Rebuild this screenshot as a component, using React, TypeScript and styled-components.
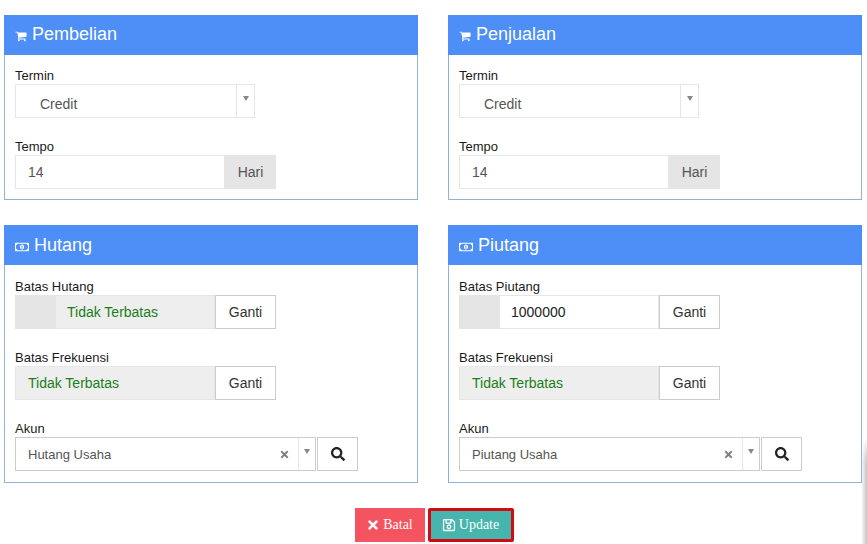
import React from "react";
import styled, { createGlobalStyle } from "styled-components";
import { FaRegMoneyBillAlt, FaTimes, FaSearch, FaRegSave } from "react-icons/fa";

const GlobalStyle = createGlobalStyle`
  html, body {
    margin: 0;
    padding: 0;
    background: #fff;
    overflow: hidden;
  }
  body {
    font-family: "Liberation Sans", Arial, sans-serif;
    font-size: 14px;
    color: #222;
  }
`;

const Page = styled.div`
  position: relative;
  width: 867px;
  height: 544px;
  box-sizing: border-box;
  padding: 15px 5px 0 4px;
`;

const EdgeShadow = styled.div`
  position: absolute;
  top: 438px;
  right: 0;
  bottom: 0;
  width: 6px;
  background: linear-gradient(to right, rgba(200, 200, 200, 0), rgba(190, 190, 190, 0.9));
  mask-image: linear-gradient(to bottom, transparent, #000 24px);
`;

const PanelGrid = styled.div`
  display: grid;
  grid-template-columns: 414px 414px;
  column-gap: 30px;
  row-gap: 25px;
  align-items: start;
`;

const Panel = styled.section`
  border: 1px solid #8fb2d6;
  border-top: 0;
  box-sizing: border-box;
`;

const Heading = styled.h3<{ $lift: number }>`
  display: flex;
  align-items: center;
  gap: 5px;
  height: 40px;
  box-sizing: border-box;
  margin: 0 -1px;
  padding: 0 11px ${p => p.$lift}px;
  background: #4d8ef7;
  color: #fff;
  font-size: 18px;
  font-weight: 400;
  line-height: 38px;

  svg {
    margin-top: 4px;
  }
`;

const PanelBody = styled.div<{ $top: number; $bottom: number }>`
  display: flex;
  flex-direction: column;
  gap: 19px;
  padding: ${p => p.$top}px 10px ${p => p.$bottom}px;
`;

const Field = styled.div`
  display: flex;
  flex-direction: column;
`;

const Label = styled.label`
  height: 18px;
  line-height: 20px;
  font-size: 13px;
  color: #1a1a1a;
`;

const Row = styled.div<{ $width: number }>`
  display: flex;
  width: ${p => p.$width}px;
  height: 34px;
`;

const SelectBox = styled.div<{ $dark?: boolean }>`
  flex: 1;
  display: flex;
  align-items: center;
  box-sizing: border-box;
  border: 1px solid ${p => (p.$dark ? "#ccc" : "#e5e6e7")};
  background: #fff;
  color: #555;
  font-size: ${p => (p.$dark ? 13 : 14)}px;
`;

const SelectValue = styled.span<{ $indent: number; $drop?: number }>`
  flex: 1;
  padding-left: ${p => p.$indent}px;
  padding-top: ${p => p.$drop ?? 0}px;
`;

const Clear = styled.span`
  display: flex;
  color: #808080;
  margin-right: 8px;
`;

const Caret = styled.span<{ $width: number }>`
  align-self: stretch;
  width: ${p => p.$width}px;
  border-left: 1px solid #e5e6e7;
  display: flex;
  justify-content: center;
  padding-top: 11px;
  box-sizing: border-box;

  &::before {
    content: "";
    width: 0;
    height: 0;
    border-left: 3px solid transparent;
    border-right: 3px solid transparent;
    border-top: 5px solid #888;
  }
`;

const TextInput = styled.div<{ $indent?: number; $readonly?: boolean; $tone?: string }>`
  flex: 1;
  display: flex;
  align-items: center;
  box-sizing: border-box;
  padding-left: ${p => p.$indent ?? 12}px;
  border: 1px solid #e5e6e7;
  background: ${p => (p.$readonly ? "#eee" : "#fff")};
  color: ${p => p.$tone ?? "#555"};
  font-size: 14px;
`;

const Addon = styled.div<{ $width: number }>`
  width: ${p => p.$width}px;
  flex: none;
  display: flex;
  align-items: center;
  justify-content: center;
  background: #e5e5e5;
  color: #555;
  font-size: 14px;
`;

const SideButton = styled.button<{ $width: number }>`
  width: ${p => p.$width}px;
  flex: none;
  box-sizing: border-box;
  display: flex;
  align-items: center;
  justify-content: center;
  padding: 0;
  border: 1px solid #ccc;
  background: #fff;
  color: #333;
  font-family: inherit;
  font-size: 14px;
`;

const SearchButton = styled(SideButton)`
  margin-left: 1px;
  color: #222;
`;

const Actions = styled.div`
  display: flex;
  justify-content: center;
  gap: 3px;
  margin-top: 25px;
  padding-left: 2px;
`;

const ActionButton = styled.button<{ $tone: string; $focused?: boolean }>`
  height: 34px;
  box-sizing: border-box;
  display: flex;
  align-items: center;
  justify-content: center;
  gap: 3px;
  border: ${p => (p.$focused ? "3px solid #d40a12" : "0")};
  border-radius: ${p => (p.$focused ? "2px" : "0")};
  padding: 0;
  background: ${p => p.$tone};
  color: #fff;
  font-family: "Liberation Serif", "Times New Roman", serif;
  font-size: 14px;
`;

const BatalButton = styled(ActionButton)`
  width: 70px;
`;

const UpdateButton = styled(ActionButton)`
  width: 86px;
`;

const CartIcon = () => (
  <svg width="12" height="12" viewBox="0 0 1792 1792" fill="currentColor" aria-hidden="true">
    <path d="M704 1536q0 52-38 90t-90 38-90-38-38-90 38-90 90-38 90 38 38 90zm896 0q0 52-38 90t-90 38-90-38-38-90 38-90 90-38 90 38 38 90zm128-1088v512q0 24-16.500 42.500t-40.500 21.500l-1044 122q13 60 13 70 0 16-24 64h920q26 0 45 19t19 45-19 45-45 19h-1024q-26 0-45-19t-19-45q0-11 8-31.500t16-36 21.500-40 15.500-29.500l-177-823h-204q-26 0-45-19t-19-45 19-45 45-19h256q16 0 28.500 6.500t19.500 15.500 13 24.500 8 26 5.500 29.500 4.500 26h1201q26 0 45 19t19 45z" />
  </svg>
);

const SelectField = ({ value }: { value: string }) => (
  <SelectBox>
    <SelectValue $indent={24} $drop={5}>{value}</SelectValue>
    <Caret $width={18} />
  </SelectBox>
);

const AkunField = ({ value }: { value: string }) => (
  <Row $width={343}>
    <SelectBox $dark>
      <SelectValue $indent={12}>{value}</SelectValue>
      <Clear><FaTimes size={11} /></Clear>
      <Caret $width={17} />
    </SelectBox>
    <SearchButton $width={41}><FaSearch /></SearchButton>
  </Row>
);

const TermPanel = ({ title }: { title: string }) => (
  <Panel>
    <Heading $lift={2}><CartIcon />{title}</Heading>
    <PanelBody $top={11} $bottom={10}>
      <Field>
        <Label>Termin</Label>
        <Row $width={240}><SelectField value="Credit" /></Row>
      </Field>
      <Field>
        <Label>Tempo</Label>
        <Row $width={261}>
          <TextInput>14</TextInput>
          <Addon $width={51}>Hari</Addon>
        </Row>
      </Field>
    </PanelBody>
  </Panel>
);

const LimitPanel = ({ title, limit, account }: { title: string; limit?: string; account: string }) => (
  <Panel>
    <Heading $lift={0}><FaRegMoneyBillAlt size={14} />{title}</Heading>
    <PanelBody $top={12} $bottom={11}>
      <Field>
        <Label>Batas {title}</Label>
        <Row $width={261}>
          <Addon $width={40} />
          {limit ? (
            <TextInput $indent={11} $tone="#222">{limit}</TextInput>
          ) : (
            <TextInput $indent={11} $readonly $tone="#1a7f1a">Tidak Terbatas</TextInput>
          )}
          <SideButton $width={61}>Ganti</SideButton>
        </Row>
      </Field>
      <Field>
        <Label>Batas Frekuensi</Label>
        <Row $width={261}>
          <TextInput $readonly $tone="#1a7f1a">Tidak Terbatas</TextInput>
          <SideButton $width={61}>Ganti</SideButton>
        </Row>
      </Field>
      <Field>
        <Label>Akun</Label>
        <AkunField value={account} />
      </Field>
    </PanelBody>
  </Panel>
);

export default function App() {
  return (
    <Page>
      <GlobalStyle />
      <PanelGrid>
        <TermPanel title="Pembelian" />
        <TermPanel title="Penjualan" />
        <LimitPanel title="Hutang" account="Hutang Usaha" />
        <LimitPanel title="Piutang" limit="1000000" account="Piutang Usaha" />
      </PanelGrid>
      <Actions>
        <BatalButton $tone="#f4545f"><FaTimes size={14} />Batal</BatalButton>
        <UpdateButton $tone="#46b5ae" $focused><FaRegSave size={14} />Update</UpdateButton>
      </Actions>
      <EdgeShadow />
    </Page>
  );
}
